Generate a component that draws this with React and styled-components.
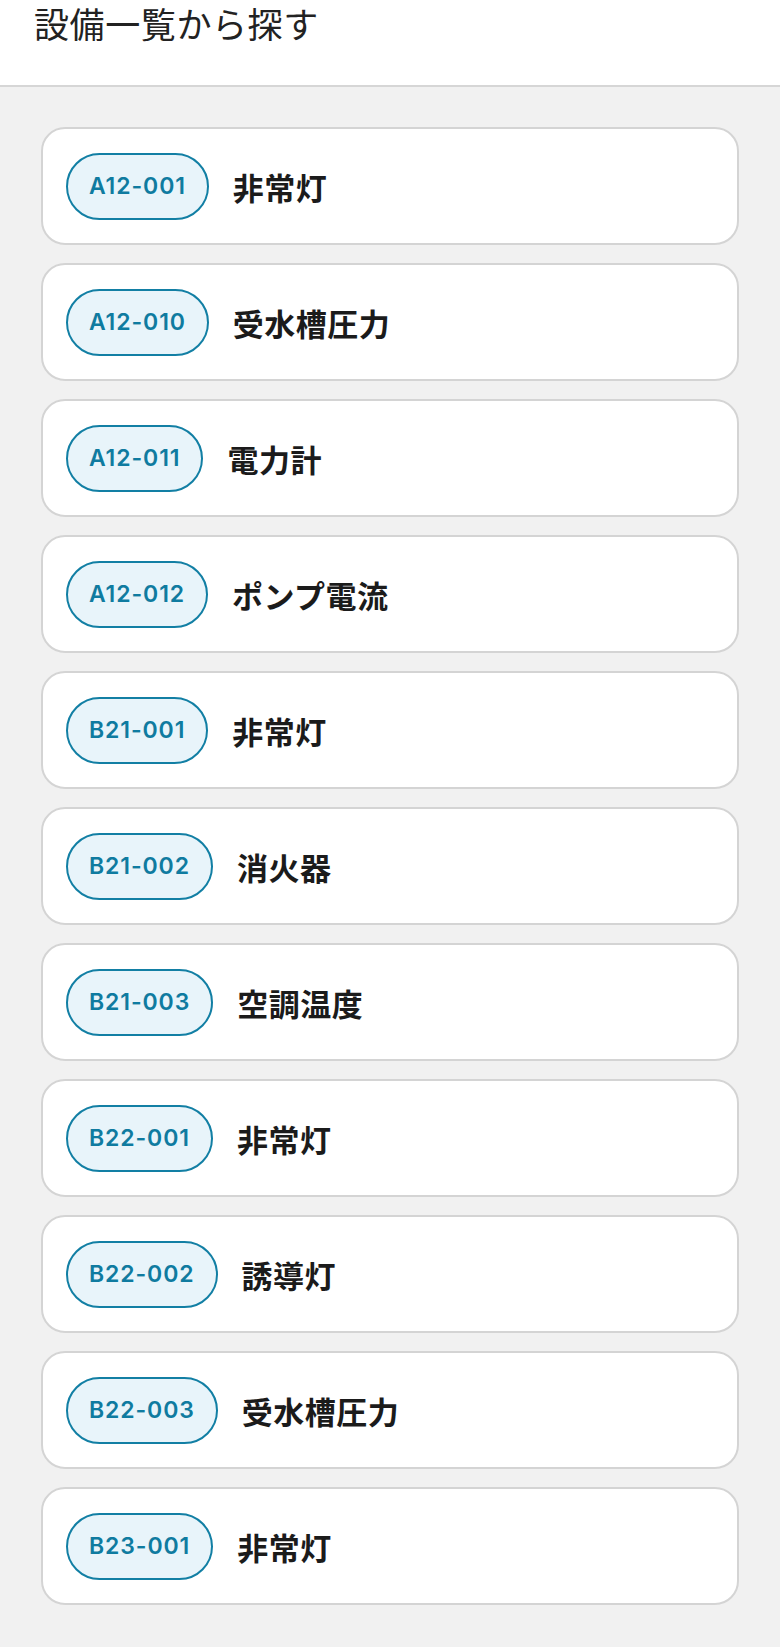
import styled, { createGlobalStyle } from 'styled-components';

const items = [
  { code: 'A12-001', name: '非常灯' },
  { code: 'A12-010', name: '受水槽圧力' },
  { code: 'A12-011', name: '電力計' },
  { code: 'A12-012', name: 'ポンプ電流' },
  { code: 'B21-001', name: '非常灯' },
  { code: 'B21-002', name: '消火器' },
  { code: 'B21-003', name: '空調温度' },
  { code: 'B22-001', name: '非常灯' },
  { code: 'B22-002', name: '誘導灯' },
  { code: 'B22-003', name: '受水槽圧力' },
  { code: 'B23-001', name: '非常灯' },
];

const GlobalStyle = createGlobalStyle`
  html, body {
    margin: 0;
    padding: 0;
    background: #f1f1f1;
  }
  body {
    font-family: Inter, "Noto Sans CJK JP", sans-serif;
  }
  * {
    box-sizing: border-box;
  }
`;

const Page = styled.div`
  min-height: 1647px;
  background: #f1f1f1;
`;

const Header = styled.header`
  background: #ffffff;
  border-bottom: 2px solid #d6d6d6;
  height: 87px;
  padding: 0 34px;
`;

const Title = styled.h1`
  margin: 0;
  font-family: "Noto Sans CJK JP", sans-serif;
  font-weight: 400;
  font-size: 35px;
  line-height: 46px;
  color: #222222;
  letter-spacing: 0.6px;
`;

const List = styled.ul`
  list-style: none;
  margin: 0;
  padding: 40px 41px 41px;
  display: flex;
  flex-direction: column;
  gap: 18px;
`;

const Card = styled.li`
  display: flex;
  align-items: center;
  gap: 24px;
  height: 118px;
  padding: 0 23px;
  background: #ffffff;
  border: 2px solid #d4d4d4;
  border-radius: 24px;
`;

const Badge = styled.span`
  display: inline-flex;
  align-items: center;
  justify-content: center;
  height: 67px;
  padding: 0 21px;
  border: 2px solid #127fa4;
  border-radius: 34px;
  background: #e8f4fa;
  color: #0f7ba0;
  font-family: Inter, sans-serif;
  font-weight: 600;
  font-size: 23px;
  letter-spacing: 0.9px;
`;

const Name = styled.span`
  font-family: "Noto Sans CJK JP", sans-serif;
  font-weight: 700;
  font-size: 31px;
  color: #1b1b1b;
  letter-spacing: 0.5px;
`;

export default function App() {
  return (
    <Page>
      <GlobalStyle />
      <Header>
        <Title>設備一覧から探す</Title>
      </Header>
      <List>
        {items.map((item) => (
          <Card key={item.code}>
            <Badge>{item.code}</Badge>
            <Name>{item.name}</Name>
          </Card>
        ))}
      </List>
    </Page>
  );
}
